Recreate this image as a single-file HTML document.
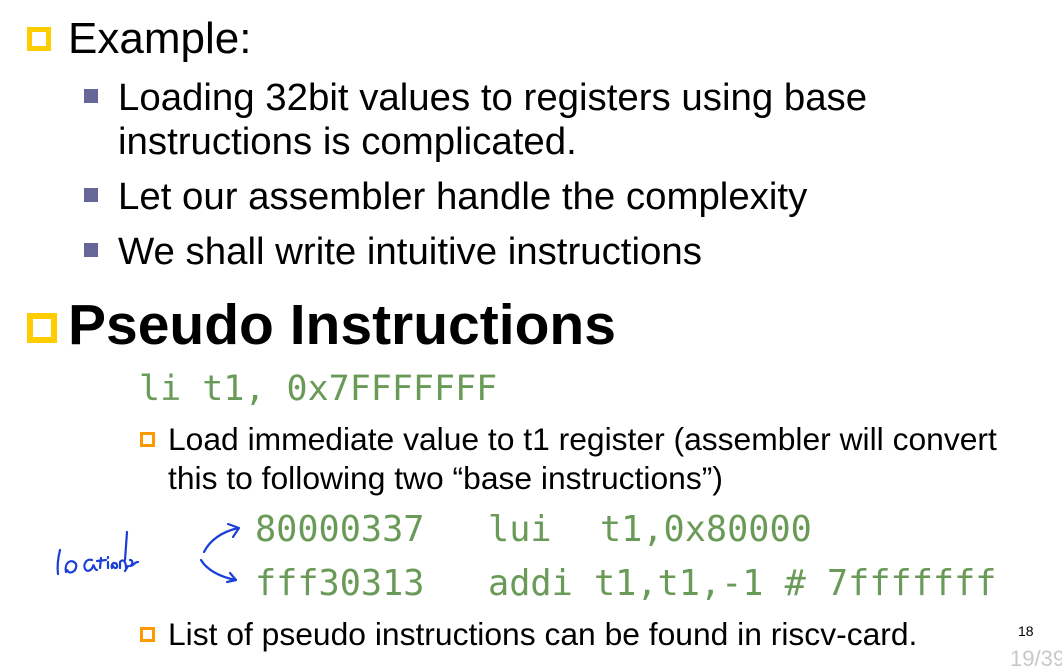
<!DOCTYPE html>
<html><head><meta charset="utf-8"><style>
html,body{margin:0;padding:0;background:#fff;}
body{width:1062px;height:661px;position:relative;overflow:hidden;font-family:"Liberation Sans",Arial,sans-serif;color:#000;}
.t{position:absolute;white-space:nowrap;line-height:1;}
.m{font-family:"DejaVu Sans Mono","Liberation Mono",monospace;color:#6a9a58;}
.yb{position:absolute;border:5px solid #ffcc00;box-sizing:border-box;background:#fff;}
.pb{position:absolute;width:14px;height:14px;background:#666699;}
.ob{position:absolute;width:15px;height:15px;border:3px solid #ff9900;box-sizing:border-box;}
</style></head><body>
<div class="yb" style="left:27px;top:27px;width:24px;height:24px;"></div>
<div class="t" style="left:68px;top:17px;font-size:44px;">Example:</div>

<div class="pb" style="left:84px;top:89px;"></div>
<div class="t" style="left:118px;top:79px;font-size:38.4px;">Loading 32bit values to registers using base</div>
<div class="t" style="left:118px;top:123px;font-size:38.4px;">instructions is complicated.</div>
<div class="pb" style="left:84px;top:188px;"></div>
<div class="t" style="left:118px;top:178px;font-size:38.4px;">Let our assembler handle the complexity</div>
<div class="pb" style="left:84px;top:243px;"></div>
<div class="t" style="left:118px;top:233px;font-size:38.4px;">We shall write intuitive instructions</div>

<div class="yb" style="left:27px;top:313px;width:30px;height:30px;border-width:6px;"></div>
<div class="t" style="left:68px;top:297px;font-size:57px;font-weight:bold;">Pseudo Instructions</div>

<div class="t m" style="left:139px;top:372px;font-size:35px;">li t1, 0x7FFFFFFF</div>

<div class="ob" style="left:140px;top:432px;"></div>
<div class="t" style="left:168px;top:424px;font-size:31.8px;">Load immediate value to t1 register (assembler will convert</div>
<div class="t" style="left:168px;top:463px;font-size:31.8px;">this to following two “base instructions”)</div>

<div class="t m" style="left:255px;top:512px;font-size:35.2px;white-space:pre;">80000337   lui  <span style="position:relative;left:6px">t1,0x80000</span></div>
<div class="t m" style="left:255px;top:566px;font-size:35.2px;white-space:pre;">fff30313   addi t1,t1,-1 # 7fffffff</div>

<div class="ob" style="left:140px;top:627px;"></div>
<div class="t" style="left:168px;top:619px;font-size:31.8px;">List of pseudo instructions can be found in riscv-card.</div>

<div class="t" style="left:1018px;top:624px;font-size:14px;">18</div>
<div class="t" style="left:1010px;top:648px;font-size:22px;color:#c8c8c8;">19/39</div>

<svg style="position:absolute;left:0;top:0" width="1062" height="661">
<g fill="none" stroke="#1a3fd6" stroke-width="2.2" stroke-linecap="round" stroke-linejoin="round">
<path d="M204 552 C210 540 222 532 238 528"/>
<path d="M228 524 L239 528 L233 537"/>
<path d="M201 560 C207 570 220 577 236 580"/>
<path d="M230 573 L236 580 L227 582"/>
<path d="M60 550 C58 558 57 566 58 574"/>
<path d="M66 572 C64 562 72 558 76 564 C78 570 70 576 67 570"/>
<path d="M92 560 C86 558 82 566 86 570 C88 572 92 570 93 566 C94 563 94 570 97 570"/>
<path d="M101 558 L100 568 M97 561 L106 560"/>
<path d="M108 562 L108 568 M108 557 L108 558"/>
<path d="M112 568 C110 562 118 561 117 567 C116 569 114 568 113 566"/>
<path d="M120 568 L120 562 C122 559 126 560 126 568"/>
<path d="M127 532 L125 560 M128 566 L125 571"/>
<path d="M130 560 C134 560 132 566 130 566 C134 566 134 562 138 562"/>
</g></svg>
</body></html>
